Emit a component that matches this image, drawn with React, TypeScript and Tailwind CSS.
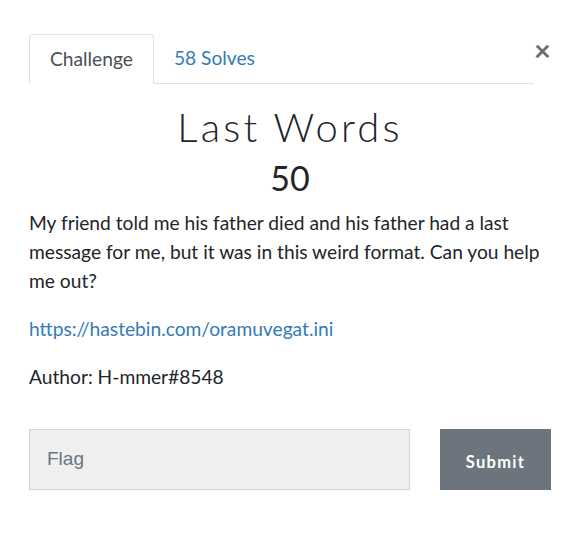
import React from "react";

export default function App() {
  return (
    <div className="min-h-[534px] bg-white font-['Lato','Noto_Sans',sans-serif] text-[#212529]">
      <div className="pl-[29px] pr-[31px] pt-[34px]">
        <div className="flex items-start">
          <ul className="flex flex-1 border-b border-[#dee2e6]">
            <li className="-mb-px rounded-t-[4px] border border-b-white border-[#dee2e6] bg-white px-[20px] py-[11px] text-[19.2px] leading-[26px] text-[#495057]">
              Challenge
            </li>
            <li className="px-[20px] py-[11px] text-[19.2px] leading-[26px] text-[#337ab7]">58 Solves</li>
          </ul>
          <button className="mt-[1px] w-[17px] pr-[2px] text-[29px] font-bold leading-[30px] text-[#6c6c6c]">×</button>
        </div>

        <h2 className="mt-[18px] text-center text-[40px] font-light leading-[50px] tracking-[0.08em]">Last Words</h2>
        <h3 className="mt-[6px] text-center text-[34px] leading-[40px]">50</h3>

        <div className="mt-[10px] text-[19.2px] leading-[29px]">
          <p>
            My friend told me his father died and his father had a last message for me, but it was in this weird
            format. Can you help me out?
          </p>
          <p className="mt-[19px] text-[#337ab7]">https://hastebin.com/oramuvegat.ini</p>
          <p className="mt-[19px]">Author: H-mmer#8548</p>
        </div>

        <div className="mt-[38px] flex gap-[30px]">
          <input
            placeholder="Flag"
            className="h-[61px] w-[381px] border border-[#ced4da] bg-[#efefef] px-[17px] pb-[2px] font-['Liberation_Sans',sans-serif] text-[19px] text-[#495057] placeholder:text-[#6c757d] outline-none"
          />
          <button className="h-[61px] w-[111px] bg-[#6c757d] pt-[6px] text-[16.5px] font-bold tracking-[0.08em] text-white">
            Submit
          </button>
        </div>
      </div>
    </div>
  );
}
